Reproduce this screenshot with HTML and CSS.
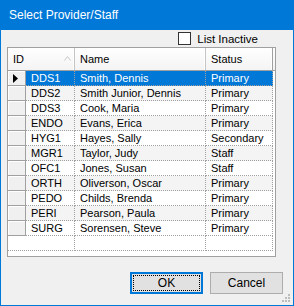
FILE: index.html
```html
<!DOCTYPE html>
<html>
<head>
<meta charset="utf-8">
<link rel="stylesheet" href="styles.css">
</head>
<body>
<div class="window">
  <div class="titlebar">Select Provider/Staff</div>
  <div class="client">
    <div class="chkrow">
      <span class="chkbox"></span>
      <span class="chklabel">List Inactive</span>
    </div>
    <div class="grid">
      <div class="hdr">
        <div class="hc hc-id">ID
          <svg class="sort" width="7" height="5" viewBox="0 0 7 5"><path d="M0.5 4.5 L3.5 0.5 L6.5 4.5" fill="none" stroke="#c8c8c8" stroke-width="1"/></svg>
        </div>
        <div class="hc hc-name">Name</div>
        <div class="hc hc-status">Status</div>
      </div>
      <div class="row sel"><div class="rh"><svg width="5" height="9" viewBox="0 0 5 9"><path d="M0 0 L5 4.5 L0 9 Z" fill="#000"/></svg></div><div class="c c-id">DDS1</div><div class="c c-name">Smith, Dennis</div><div class="c c-status">Primary</div></div>
      <div class="row alt"><div class="rh"></div><div class="c c-id">DDS2</div><div class="c c-name">Smith Junior, Dennis</div><div class="c c-status">Primary</div></div>
      <div class="row"><div class="rh"></div><div class="c c-id">DDS3</div><div class="c c-name">Cook, Maria</div><div class="c c-status">Primary</div></div>
      <div class="row alt"><div class="rh"></div><div class="c c-id">ENDO</div><div class="c c-name">Evans, Erica</div><div class="c c-status">Primary</div></div>
      <div class="row"><div class="rh"></div><div class="c c-id">HYG1</div><div class="c c-name">Hayes, Sally</div><div class="c c-status">Secondary</div></div>
      <div class="row alt"><div class="rh"></div><div class="c c-id">MGR1</div><div class="c c-name">Taylor, Judy</div><div class="c c-status">Staff</div></div>
      <div class="row"><div class="rh"></div><div class="c c-id">OFC1</div><div class="c c-name">Jones, Susan</div><div class="c c-status">Staff</div></div>
      <div class="row alt"><div class="rh"></div><div class="c c-id">ORTH</div><div class="c c-name">Oliverson, Oscar</div><div class="c c-status">Primary</div></div>
      <div class="row"><div class="rh"></div><div class="c c-id">PEDO</div><div class="c c-name">Childs, Brenda</div><div class="c c-status">Primary</div></div>
      <div class="row alt"><div class="rh"></div><div class="c c-id">PERI</div><div class="c c-name">Pearson, Paula</div><div class="c c-status">Primary</div></div>
      <div class="row"><div class="rh"></div><div class="c c-id">SURG</div><div class="c c-name">Sorensen, Steve</div><div class="c c-status">Primary</div></div>
      <div class="row empty"><div class="c c-first"></div><div class="c c-name"></div><div class="c c-status"></div></div>
    </div>
    <div class="btnrow">
      <button class="btn btn-ok"><span class="focus">OK</span></button>
      <button class="btn">Cancel</button>
    </div>
  </div>
  <svg class="grip" width="9" height="9" viewBox="0 0 9 9">
    <rect x="6" y="0" width="2" height="2" fill="#bcbcbc"/>
    <rect x="3" y="3" width="2" height="2" fill="#bcbcbc"/>
    <rect x="6" y="3" width="2" height="2" fill="#bcbcbc"/>
    <rect x="0" y="6" width="2" height="2" fill="#bcbcbc"/>
    <rect x="3" y="6" width="2" height="2" fill="#bcbcbc"/>
    <rect x="6" y="6" width="2" height="2" fill="#bcbcbc"/>
  </svg>
</div>
</body>
</html>
```
FILE: styles.css
```css
html, body {
  margin: 0;
  padding: 0;
  background: #fff;
}
.window {
  position: relative;
  width: 294px;
  height: 306px;
  box-sizing: border-box;
  border: 1px solid #0078d7;
  border-top: none;
  background: #f0f0f0;
  font-family: "Liberation Sans", Arial, sans-serif;
  font-size: 11px;
  color: #000;
  display: flex;
  flex-direction: column;
}
.titlebar {
  height: 30px;
  margin: 0 -1px;
  background: #0078d7;
  color: #fff;
  font-size: 12px;
  line-height: 30px;
  padding-left: 9px;
}
.client {
  display: flex;
  flex-direction: column;
  flex: 1;
}
.chkrow {
  display: flex;
  align-items: center;
  justify-content: flex-end;
  margin-top: 2px;
  padding-right: 35px;
  height: 13px;
}
.chkbox {
  width: 13px;
  height: 13px;
  box-sizing: border-box;
  border: 1px solid #333;
  background: #fff;
  margin-right: 6px;
}
.chklabel {
  font-size: 11.5px;
}
.grid {
  margin: 2px 0 0 6px;
  width: 269px;
  height: 210px;
  box-sizing: border-box;
  border: 1px solid #a0a0a0;
  background: #fff;
  overflow: hidden;
}
.hdr {
  display: flex;
  height: 23px;
  box-sizing: border-box;
  border-bottom: 1px solid #a0a0a0;
  background: linear-gradient(#ffffff, #f4f4f4);
}
.hc {
  position: relative;
  box-sizing: border-box;
  padding-left: 5px;
  line-height: 22px;
  border-right: 1px solid #c5c5c5;
  box-shadow: inset -1px 0 0 #fff;
}
.hc-id { width: 67px; }
.hc-name { width: 131px; }
.hc-status { width: 67px; border-right: 1px solid #a0a0a0; }
.sort {
  position: absolute;
  left: 56px;
  top: 8px;
}
.row {
  display: flex;
  height: 15px;
  box-sizing: border-box;
}
.row.alt .c { background: #f4f4f4; }
.rh {
  width: 18px;
  height: 15px;
  box-sizing: border-box;
  background: #f0f0f0;
  border-right: 1px solid #a0a0a0;
  border-bottom: 1px solid #a0a0a0;
  box-shadow: inset 1px 1px 0 #fff;
  display: flex;
  align-items: center;
  padding-left: 5px;
}
.c {
  box-sizing: border-box;
  height: 15px;
  line-height: 14px;
  padding-left: 5px;
  border-right: 1px dotted #a0a0a0;
  border-bottom: 1px dotted #a0a0a0;
  white-space: nowrap;
  overflow: hidden;
}
.c-id { width: 49px; }
.c-first { width: 67px; }
.c-name { width: 131px; }
.c-status { width: 67px; }
.row.sel .c {
  background: #0078d7;
  color: #fff;
}
.btnrow {
  display: flex;
  margin: 15px 0 0 129px;
  gap: 7px;
}
.btn {
  width: 73px;
  height: 22px;
  box-sizing: border-box;
  border: 1px solid #adadad;
  background: #e1e1e1;
  font-family: "Liberation Sans", Arial, sans-serif;
  font-size: 12px;
  color: #000;
  padding: 0;
  margin: 0;
}
.btn-ok {
  border: 2px solid #0078d7;
  padding: 1px;
}
.focus {
  display: flex;
  align-items: center;
  justify-content: center;
  width: 100%;
  height: 100%;
  box-sizing: border-box;
  border: 1px dotted #000;
}
.grip {
  position: absolute;
  right: 2px;
  bottom: 2px;
}
```
